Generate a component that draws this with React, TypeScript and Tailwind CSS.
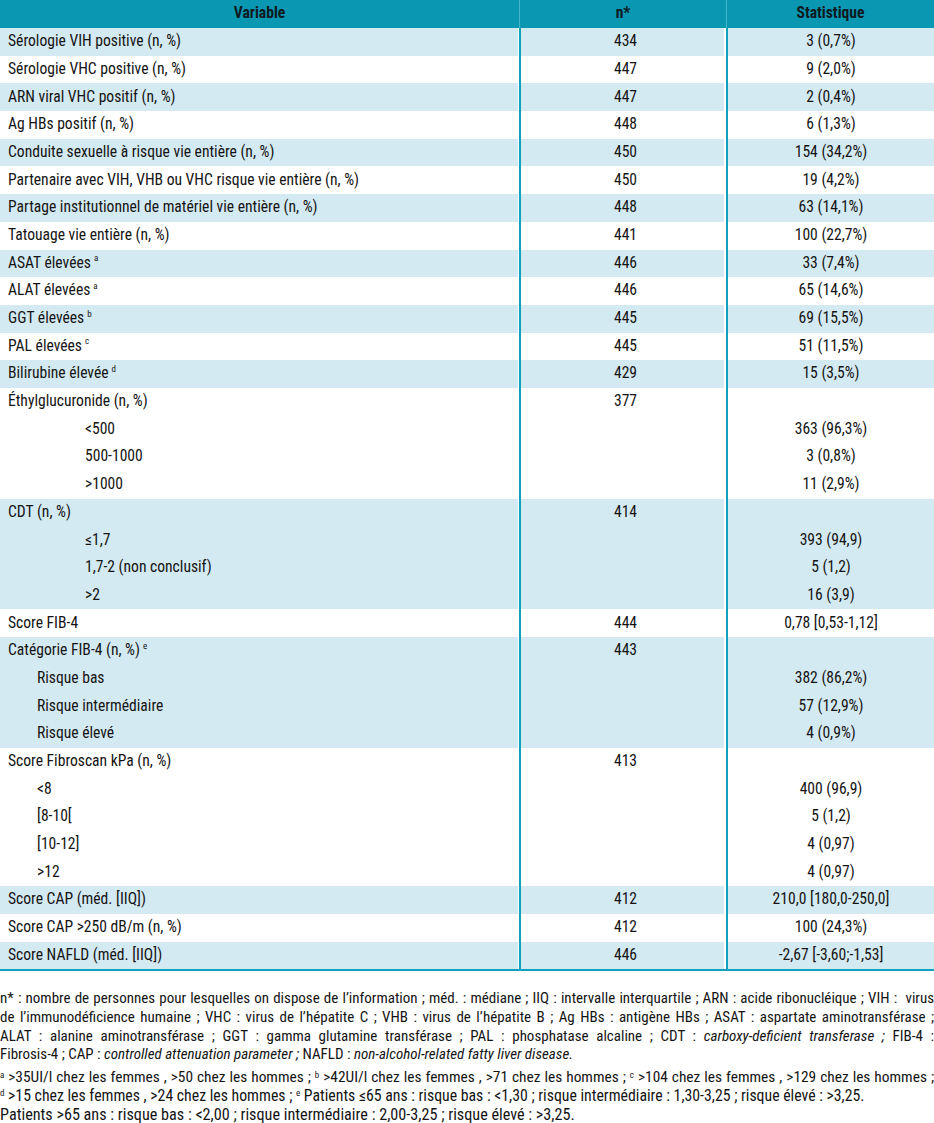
type Line = { label: React.ReactNode; n?: string; stat?: string; indent?: 0 | 1 | 2 };
type Group = Line[];

const Sup = ({ c }: { c: string }) => <sup className="ml-[3px] text-[9px] leading-none">{c}</sup>;
const FnSup = ({ c }: { c: string }) => <sup className="text-[9px] leading-none">{c}</sup>;

const groups: Group[] = [
  [{ label: 'Sérologie VIH positive (n, %)', n: '434', stat: '3 (0,7%)' }],
  [{ label: 'Sérologie VHC positive (n, %)', n: '447', stat: '9 (2,0%)' }],
  [{ label: 'ARN viral VHC positif (n, %)', n: '447', stat: '2 (0,4%)' }],
  [{ label: 'Ag HBs positif (n, %)', n: '448', stat: '6 (1,3%)' }],
  [{ label: 'Conduite sexuelle à risque vie entière (n, %)', n: '450', stat: '154 (34,2%)' }],
  [{ label: 'Partenaire avec VIH, VHB ou VHC risque vie entière (n, %)', n: '450', stat: '19 (4,2%)' }],
  [{ label: 'Partage institutionnel de matériel vie entière (n, %)', n: '448', stat: '63 (14,1%)' }],
  [{ label: 'Tatouage vie entière (n, %)', n: '441', stat: '100 (22,7%)' }],
  [{ label: <>ASAT élevées<Sup c="a" /></>, n: '446', stat: '33 (7,4%)' }],
  [{ label: <>ALAT élevées<Sup c="a" /></>, n: '446', stat: '65 (14,6%)' }],
  [{ label: <>GGT élevées<Sup c="b" /></>, n: '445', stat: '69 (15,5%)' }],
  [{ label: <>PAL élevées<Sup c="c" /></>, n: '445', stat: '51 (11,5%)' }],
  [{ label: <>Bilirubine élevée<Sup c="d" /></>, n: '429', stat: '15 (3,5%)' }],
  [
    { label: 'Éthylglucuronide (n, %)', n: '377' },
    { label: '<500', stat: '363 (96,3%)', indent: 2 },
    { label: '500-1000', stat: '3 (0,8%)', indent: 2 },
    { label: '>1000', stat: '11 (2,9%)', indent: 2 },
  ],
  [
    { label: 'CDT (n, %)', n: '414' },
    { label: '≤1,7', stat: '393 (94,9)', indent: 2 },
    { label: '1,7-2 (non conclusif)', stat: '5 (1,2)', indent: 2 },
    { label: '>2', stat: '16 (3,9)', indent: 2 },
  ],
  [{ label: 'Score FIB-4', n: '444', stat: '0,78 [0,53-1,12]' }],
  [
    { label: <>Catégorie FIB-4 (n, %)<Sup c="e" /></>, n: '443' },
    { label: 'Risque bas', stat: '382 (86,2%)', indent: 1 },
    { label: 'Risque intermédiaire', stat: '57 (12,9%)', indent: 1 },
    { label: 'Risque élevé', stat: '4 (0,9%)', indent: 1 },
  ],
  [
    { label: 'Score Fibroscan kPa (n, %)', n: '413' },
    { label: '<8', stat: '400 (96,9)', indent: 1 },
    { label: '[8-10[', stat: '5 (1,2)', indent: 1 },
    { label: '[10-12]', stat: '4 (0,97)', indent: 1 },
    { label: '>12', stat: '4 (0,97)', indent: 1 },
  ],
  [{ label: 'Score CAP (méd. [IIQ])', n: '412', stat: '210,0 [180,0-250,0]' }],
  [{ label: 'Score CAP >250 dB/m (n, %)', n: '412', stat: '100 (24,3%)' }],
  [{ label: 'Score NAFLD (méd. [IIQ])', n: '446', stat: '-2,67 [-3,60;-1,53]' }],
];

const indentCls = ['pl-2', 'pl-[37px]', 'pl-[85px]'];

// footnote lines are set one by one, as in the printed page
const just = 'whitespace-nowrap text-justify [text-align-last:justify]';

export default function App() {
  return (
    <div className="w-[934px] bg-white font-['Roboto_Condensed',sans-serif] text-[#141414]">
      <div className="border-b-2 border-[#13a0bc]">
        <div className="grid h-[28px] grid-cols-[519px_207px_1fr] bg-[#0a97b2] text-[15.6px] font-bold text-[#0d1a1f]">
          <div className="flex items-center justify-center">Variable</div>
          <div className="flex items-center justify-center border-l border-[#45b6cb]">n*</div>
          <div className="flex items-center justify-center border-l border-[#45b6cb]">Statistique</div>
        </div>
        {groups.map((g, gi) => (
          <div key={gi} className={gi % 2 === 0 ? 'bg-[#d4eaf2]' : 'bg-white'}>
            {g.map((l, li) => (
              <div key={li} className="grid h-[27.7px] grid-cols-[519px_207px_1fr] text-[15.6px]">
                <div className={`flex items-center border-r border-white ${indentCls[l.indent ?? 0]}`}>{l.label}</div>
                <div className="flex items-center justify-center border-x-2 border-l-[#13a0bc] border-r-white pl-[6px]">{l.n}</div>
                <div className="flex items-center justify-center border-l-2 border-[#13a0bc]">{l.stat}</div>
              </div>
            ))}
          </div>
        ))}
      </div>

      <div className="mt-[18px] leading-[18.7px]">
        <div className="text-[15px]">
          <div className={just}>
            n* : nombre de personnes pour lesquelles on dispose de l’information ; méd. : médiane ; IIQ : intervalle interquartile ; ARN : acide ribonucléique ; VIH :&nbsp; virus
          </div>
          <div className={just}>
            de l’immunodéficience humaine ; VHC : virus de l’hépatite C ; VHB : virus de l’hépatite B ; Ag HBs : antigène HBs ; ASAT : aspartate aminotransférase ;
          </div>
          <div className={just}>
            ALAT : alanine aminotransférase ; GGT : gamma glutamine transférase ; PAL : phosphatase alcaline ; CDT : <i>carboxy-deficient transferase ;</i> FIB-4 :
          </div>
          <div className="whitespace-nowrap">
            Fibrosis-4 ; CAP : <i>controlled attenuation parameter ;</i> NAFLD : <i>non-alcohol-related fatty liver disease.</i>
          </div>
        </div>
        <div className="mt-[4px]">
          <div className={`${just} text-[15.4px]`}>
            <FnSup c="a" /> &gt;35UI/l chez les femmes , &gt;50 chez les hommes ; <FnSup c="b" /> &gt;42UI/l chez les femmes , &gt;71 chez les hommes ; <FnSup c="c" /> &gt;104 chez les femmes , &gt;129 chez les hommes ;
          </div>
          <div className="whitespace-nowrap text-[15.8px]">
            <FnSup c="d" /> &gt;15 chez les femmes , &gt;24 chez les hommes ; <FnSup c="e" /> Patients ≤65 ans : risque bas : &lt;1,30 ; risque intermédiaire : 1,30-3,25 ; risque élevé : &gt;3,25.
          </div>
        </div>
        <div className="whitespace-nowrap text-[16.2px]">
          Patients &gt;65 ans : risque bas : &lt;2,00 ; risque intermédiaire : 2,00-3,25 ; risque élevé : &gt;3,25.
        </div>
      </div>
    </div>
  );
}
